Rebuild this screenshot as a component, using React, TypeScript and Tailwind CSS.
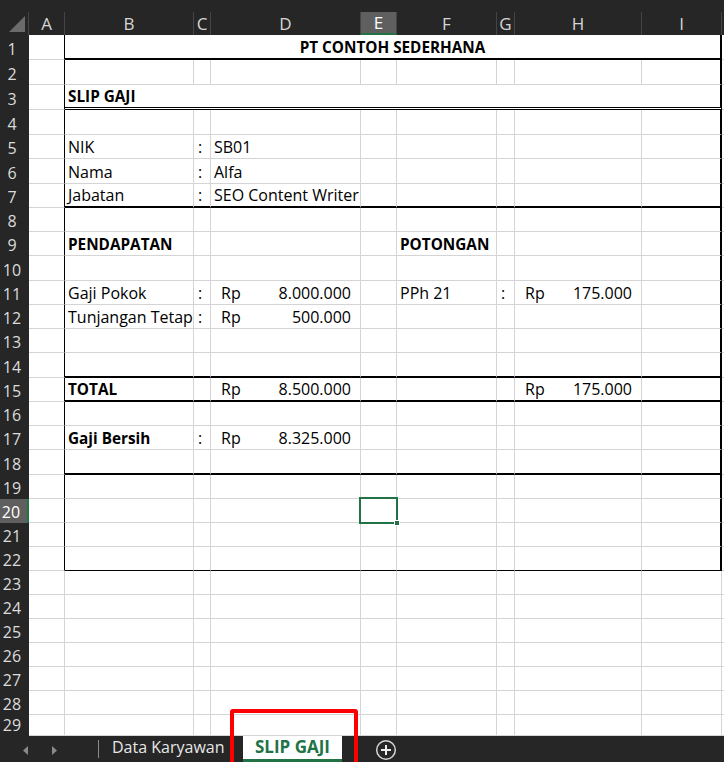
import React from 'react';

type CellData = { t?: string; b?: boolean; acct?: string };

const COLS: { key: string; w: string; pad: string }[] = [
  { key: 'B', w: 'w-[129px]', pad: 'pl-[3px]' },
  { key: 'C', w: 'w-[17px]', pad: 'pl-[4px]' },
  { key: 'D', w: 'w-[150px]', pad: 'pl-[3px]' },
  { key: 'E', w: 'w-[36px]', pad: 'pl-[3px]' },
  { key: 'F', w: 'w-[100px]', pad: 'pl-[3px]' },
  { key: 'G', w: 'w-[18px]', pad: 'pl-[4px]' },
  { key: 'H', w: 'w-[127px]', pad: 'pl-[3px]' },
  { key: 'I', w: 'w-[80px]', pad: 'pl-[3px]' },
];

const HEADERS: { key: string; w: string }[] = [
  { key: 'A', w: 'w-[36px]' },
  ...COLS.map((c) => ({ key: c.key, w: c.w })),
];

const DATA: Record<number, Record<string, CellData>> = {
  5: { B: { t: 'NIK' }, C: { t: ':' }, D: { t: 'SB01' } },
  6: { B: { t: 'Nama' }, C: { t: ':' }, D: { t: 'Alfa' } },
  7: { B: { t: 'Jabatan' }, C: { t: ':' }, D: { t: 'SEO Content Writer' } },
  9: { B: { t: 'PENDAPATAN', b: true }, F: { t: 'POTONGAN', b: true } },
  11: {
    B: { t: 'Gaji Pokok' },
    C: { t: ':' },
    D: { acct: '8.000.000' },
    F: { t: 'PPh 21' },
    G: { t: ':' },
    H: { acct: '175.000' },
  },
  12: { B: { t: 'Tunjangan Tetap' }, C: { t: ':' }, D: { acct: '500.000' } },
  15: { B: { t: 'TOTAL', b: true }, D: { acct: '8.500.000' }, H: { acct: '175.000' } },
  17: { B: { t: 'Gaji Bersih', b: true }, C: { t: ':' }, D: { acct: '8.325.000' } },
};

// bottom borders of the slip box (columns B..I)
const BOTTOM: Record<number, string> = {
  1: 'border-b-2 border-b-black',
  3: 'border-b-[3px] border-double border-b-black',
  7: 'border-b-2 border-b-black',
  14: 'border-b-2 border-b-black',
  15: 'border-b-2 border-b-black',
  18: 'border-b-2 border-b-black',
  22: 'border-b border-b-black',
};

const GRID_B = 'border-b border-b-[#d4d4d4]';

function rowHeight(n: number) {
  if (n <= 4) return 'h-[25px]';
  if (n <= 20) return 'h-[24.25px]';
  if (n === 29) return 'h-[21px]';
  return 'h-[24px]';
}

function HeaderRow() {
  return (
    <div className="flex h-[23px] shrink-0 bg-[#262626] text-[17px] text-[#d6d6d6]">
      <div className="relative w-[29px] shrink-0 border-r border-r-[#454545]">
        <svg className="absolute left-0 top-0" width="29" height="23" viewBox="0 0 29 23">
          <polygon points="9,20 25,20 25,4" fill="#6b6b6b" />
        </svg>
      </div>
      {HEADERS.map((h) => (
        <div
          key={h.key}
          className={`${h.w} flex shrink-0 items-center justify-center border-r border-r-[#454545] ${
            h.key === 'E' ? 'border-b-2 border-b-[#217346] bg-[#5f5f5f] text-white' : ''
          }`}
        >
          {h.key}
        </div>
      ))}
      <div className="flex-1" />
    </div>
  );
}

function CellContent({ d }: { d?: CellData }) {
  if (!d) return null;
  if (d.acct) {
    return (
      <div className="flex w-full justify-between pl-[10px] pr-[9px]">
        <span>Rp</span>
        <span>{d.acct}</span>
      </div>
    );
  }
  return <span className={`whitespace-nowrap ${d.b ? 'text-[15.3px] font-bold' : ''}`}>{d.t}</span>;
}

function SheetRow({ n }: { n: number }) {
  const inBox = n <= 22;
  const bottom = inBox && BOTTOM[n] ? BOTTOM[n] : GRID_B;
  const row = DATA[n] ?? {};
  const merged = n === 1 || n === 3;
  const selectedRow = n === 20;
  const last = n === 29;

  return (
    <div className={`flex ${rowHeight(n)} shrink-0`}>
      <div
        className={`flex w-[29px] shrink-0 justify-center pr-[5px] text-[16px] ${
          last ? 'items-start leading-[20px]' : 'items-end leading-[22px]'
        } ${
          selectedRow
            ? 'border-r-2 border-r-[#217346] bg-[#5f5f5f] text-white'
            : 'bg-[#262626] text-[#dcdcdc]'
        }`}
      >
        {n}
      </div>
      <div
        className={`w-[36px] shrink-0 border-r ${GRID_B} ${inBox ? 'border-r-black' : 'border-r-[#d4d4d4]'}`}
      />
      {merged ? (
        <div
          className={`flex w-[657px] shrink-0 items-end border-r-2 border-r-black leading-[22px] ${bottom} ${
            n === 1 ? 'justify-center' : 'pl-[3px]'
          }`}
        >
          <span className="text-[15.3px] font-bold">
            {n === 1 ? 'PT CONTOH SEDERHANA' : 'SLIP GAJI'}
          </span>
        </div>
      ) : (
        COLS.map((c) => {
          const right =
            inBox && c.key === 'I' ? 'border-r-2 border-r-black' : 'border-r border-r-[#d4d4d4]';
          const cellBottom = inBox ? bottom : GRID_B;
          const d = row[c.key];
          return (
            <div
              key={c.key}
              className={`relative flex ${c.w} shrink-0 items-end leading-[22px] ${right} ${cellBottom} ${
                d?.acct ? '' : c.pad
              }`}
            >
              <CellContent d={d} />
              {selectedRow && c.key === 'E' && (
                <div className="absolute left-[-2px] top-[-2px] z-10 h-[27px] w-[39px] border-2 border-[#217346]">
                  <div className="absolute bottom-[-4px] right-[-4px] h-[6px] w-[6px] border border-white bg-[#217346]" />
                </div>
              )}
            </div>
          );
        })
      )}
      <div className={`flex-1 ${GRID_B}`} />
    </div>
  );
}

function TabBar() {
  return (
    <div className="flex h-[26px] shrink-0 items-stretch bg-[#262626] text-[16px]">
      <svg width="98" height="26" viewBox="0 0 98 26" className="shrink-0">
        <polygon points="28,10 28,19 23,14.5" fill="#8a8a8a" />
        <polygon points="52,10 52,19 57,14.5" fill="#8a8a8a" />
      </svg>
      <div className="my-[4px] w-px shrink-0 bg-[#8a8a8a]" />
      <div className="flex w-[144px] shrink-0 items-center pb-[4px] pl-[13px] text-[#e6e6e6]">
        Data Karyawan
      </div>
      <div className="flex w-[99px] shrink-0 items-center justify-center border-b-[3px] border-b-[#217346] bg-white pb-[1px] text-[17px] font-bold text-[#217346]">
        SLIP GAJI
      </div>
      <div className="ml-[33px] flex items-center pt-[1px]">
        <svg width="22" height="22" viewBox="0 0 22 22">
          <circle cx="11" cy="11" r="9.3" fill="none" stroke="#d6d6d6" strokeWidth="1.5" />
          <path d="M11 6v10M6 11h10" stroke="#ededed" strokeWidth="2" />
        </svg>
      </div>
    </div>
  );
}

export default function App() {
  const rows = Array.from({ length: 29 }, (_, i) => i + 1);
  return (
    <div className="relative flex h-[762px] w-full flex-col overflow-hidden bg-white font-['Open_Sans',sans-serif] text-[16px] text-black">
      <div className="h-[12px] shrink-0 bg-[#262626]" />
      <HeaderRow />
      <div className="flex flex-1 flex-col overflow-hidden">
        {rows.map((n) => (
          <SheetRow key={n} n={n} />
        ))}
      </div>
      <TabBar />
      <div className="pointer-events-none absolute left-[230px] top-[709px] h-[60px] w-[128px] rounded-[3px] border-4 border-[#ff0000]" />
    </div>
  );
}
